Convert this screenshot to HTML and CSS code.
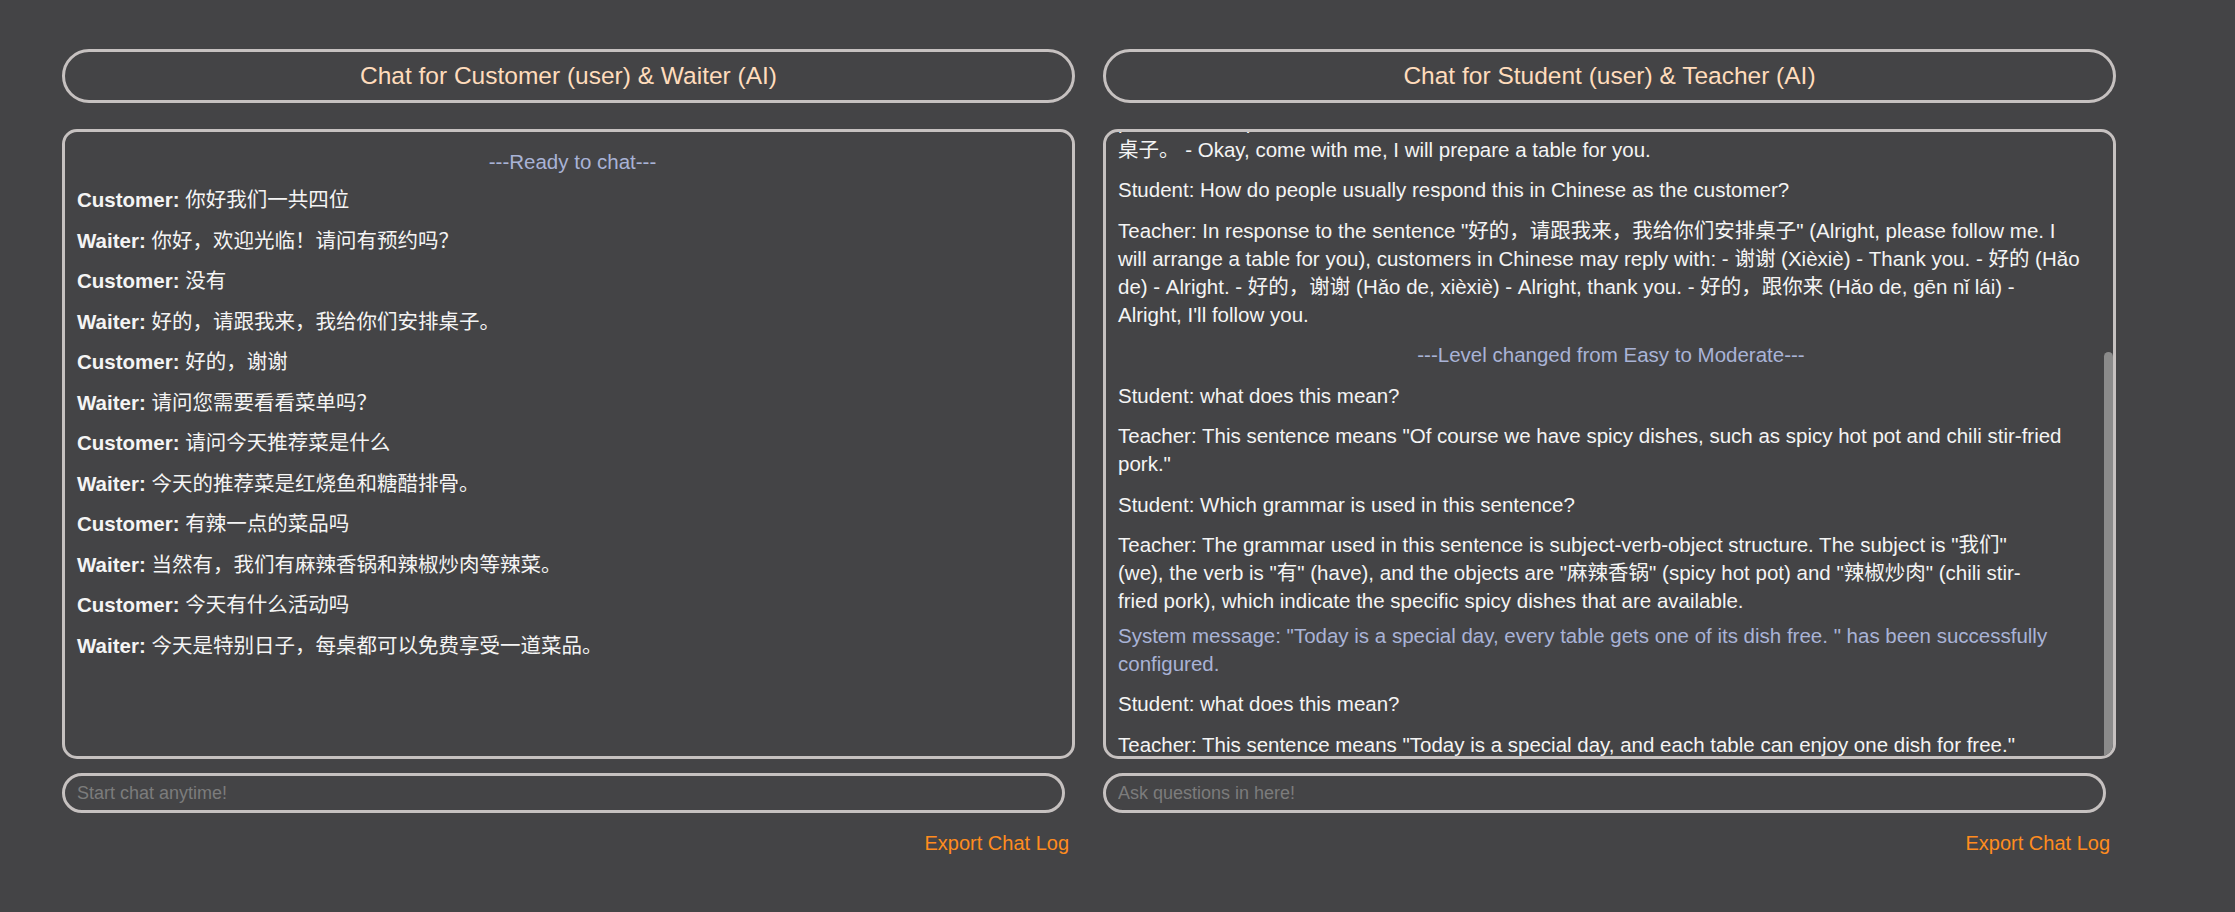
FILE: index.html
```html
<!DOCTYPE html>
<html lang="en">
<head>
<meta charset="utf-8">
<title>Chat</title>
<link rel="stylesheet" href="styles.css">
</head>
<body>
<div class="app">
  <section class="col">
    <div class="title">Chat for Customer (user) &amp; Waiter (AI)</div>
    <div class="chat-frame">
      <div class="chat">
        <div class="log">
          <p class="notice">---Ready to chat---</p>
          <p class="msg"><b>Customer:</b> 你好我们一共四位</p>
          <p class="msg"><b>Waiter:</b> 你好，欢迎光临！请问有预约吗？</p>
          <p class="msg"><b>Customer:</b> 没有</p>
          <p class="msg"><b>Waiter:</b> 好的，请跟我来，我给你们安排桌子。</p>
          <p class="msg"><b>Customer:</b> 好的，谢谢</p>
          <p class="msg"><b>Waiter:</b> 请问您需要看看菜单吗？</p>
          <p class="msg"><b>Customer:</b> 请问今天推荐菜是什么</p>
          <p class="msg"><b>Waiter:</b> 今天的推荐菜是红烧鱼和糖醋排骨。</p>
          <p class="msg"><b>Customer:</b> 有辣一点的菜品吗</p>
          <p class="msg"><b>Waiter:</b> 当然有，我们有麻辣香锅和辣椒炒肉等辣菜。</p>
          <p class="msg"><b>Customer:</b> 今天有什么活动吗</p>
          <p class="msg"><b>Waiter:</b> 今天是特别日子，每桌都可以免费享受一道菜品。</p>
        </div>
      </div>
    </div>
    <input class="ask" type="text" placeholder="Start chat anytime!">
    <div class="actions"><a class="export" href="#">Export Chat Log</a></div>
  </section>

  <section class="col">
    <div class="title">Chat for Student (user) &amp; Teacher (AI)</div>
    <div class="chat-frame">
      <div class="chat chat-wide" id="teacherChat">
        <div class="log">
          <p class="notice">---Ready to chat---</p>
          <p class="msg">Student: what does this mean?</p>
          <p class="msg">Teacher: This sentence means "Hello, welcome! Do you have a reservation?"</p>
          <p class="msg">Student: How do I say it more politely?</p>
          <p class="msg">Teacher: You can say "请问您有预约吗？" (Qǐngwèn nín yǒu yùyuē ma?)</p>
          <p class="msg">Student: How should the waiter answer if we have no reservation?</p>
          <p class="msg">Teacher: If there is no reservation, the waiter may respond with: - 没关系 (Méi guānxi) - It doesn't matter.<br>- 我们还有空位 (Wǒmen hái yǒu kòngwèi) - We still have free tables. - 请这边走 (Qǐng zhèbiān zǒu) - This way,<br>please. A complete answer could be: 好的，请跟我来，我给你们安排<br>桌子。 - Okay, come with me, I will prepare a table for you.</p>
          <p class="msg">Student: How do people usually respond this in Chinese as the customer?</p>
          <p class="msg">Teacher: In response to the sentence "好的，请跟我来，我给你们安排桌子" (Alright, please follow me. I<br>will arrange a table for you), customers in Chinese may reply with: - 谢谢 (Xièxiè) - Thank you. - 好的 (Hǎo<br>de) - Alright. - 好的，谢谢 (Hǎo de, xièxiè) - Alright, thank you. - 好的，跟你来 (Hǎo de, gēn nǐ lái) -<br>Alright, I'll follow you.</p>
          <p class="notice">---Level changed from Easy to Moderate---</p>
          <p class="msg">Student: what does this mean?</p>
          <p class="msg">Teacher: This sentence means "Of course we have spicy dishes, such as spicy hot pot and chili stir-fried<br>pork."</p>
          <p class="msg">Student: Which grammar is used in this sentence?</p>
          <p class="msg">Teacher: The grammar used in this sentence is subject-verb-object structure. The subject is "我们"<br>(we), the verb is "有" (have), and the objects are "麻辣香锅" (spicy hot pot) and "辣椒炒肉" (chili stir-<br>fried pork), which indicate the specific spicy dishes that are available.</p>
          <p class="msg sys">System message: "Today is a special day, every table gets one of its dish free. " has been successfully<br>configured.</p>
          <p class="msg">Student: what does this mean?</p>
          <p class="msg">Teacher: This sentence means "Today is a special day, and each table can enjoy one dish for free."</p>
        </div>
      </div>
      <div class="thumb"></div>
    </div>
    <input class="ask" type="text" placeholder="Ask questions in here!">
    <div class="actions"><a class="export" href="#">Export Chat Log</a></div>
  </section>
</div>
<script src="script.js"></script>
</body>
</html>
```

FILE: styles.css
```css
html, body {
  margin: 0;
  padding: 0;
  background: #444446;
  height: 100%;
}

body {
  font-family: "Liberation Sans", "Noto Sans CJK SC", sans-serif;
  color: #f4f4f4;
}

.app {
  display: flex;
  gap: 28px;
  padding: 49px 119px 0 62px;
}

.col {
  flex: 1 1 0;
  min-width: 0;
  display: flex;
  flex-direction: column;
}

.title {
  box-sizing: border-box;
  height: 54px;
  border: 3px solid #c6c1c0;
  border-radius: 27px;
  display: flex;
  align-items: center;
  justify-content: center;
  color: #ffdcbc;
  font-size: 24.5px;
}

.chat-frame {
  position: relative;
  box-sizing: border-box;
  margin-top: 26px;
  height: 630px;
  border: 3px solid #c6c1c0;
  border-radius: 15px;
  overflow: hidden;
}

.chat {
  box-sizing: border-box;
  height: 100%;
  padding: 16px 4px 12px 12px;
  overflow-y: auto;
  scrollbar-width: none;
}

.chat::-webkit-scrollbar {
  display: none;
}

.chat-wide {
  padding-right: 9px;
  padding-bottom: 0;
}

.thumb {
  position: absolute;
  right: 0;
  top: 220px;
  bottom: 0;
  width: 9px;
  background: #8b8b8b;
  border-radius: 5px 5px 0 0;
}

.log p {
  margin: 0 0 12.5px;
  font-size: 20.5px;
  line-height: 28px;
}

.log p:last-child {
  margin-bottom: 0;
}

.log .notice {
  text-align: center;
  color: #a9b3d6;
}

.log .notice:first-child {
  margin-bottom: 10px;
}

.log .sys {
  color: #a9b3d6;
  margin-top: -6px;
}

.ask {
  box-sizing: border-box;
  margin-top: 14px;
  width: calc(100% - 10px);
  height: 40px;
  border: 3px solid #c6c1c0;
  border-radius: 20px;
  background: transparent;
  padding: 0 12px;
  font-family: "Liberation Sans", "Noto Sans CJK SC", sans-serif;
  font-size: 18px;
  color: #f4f4f4;
  outline: none;
}

.ask::placeholder {
  color: #7c7c7c;
}

.actions {
  display: flex;
  justify-content: flex-end;
  margin-top: 16px;
  padding-right: 6px;
}

.export {
  color: #ff8c1e;
  text-decoration: none;
  font-size: 20px;
  line-height: 28px;
}
```

FILE: script.js
```js
var chat = document.getElementById('teacherChat');
chat.scrollTop = chat.scrollHeight - chat.clientHeight - 3;
```
